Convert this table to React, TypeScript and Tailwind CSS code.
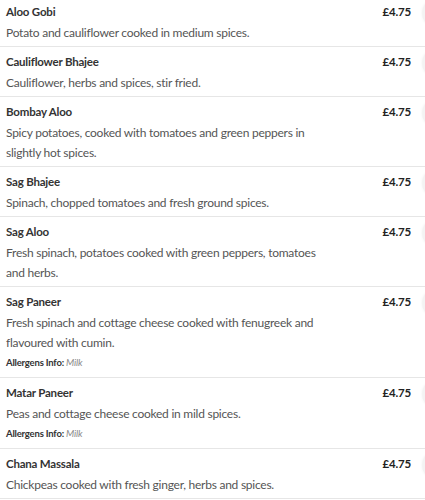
import React from "react";

type Dish = {
  name: string;
  desc: string;
  price: string;
  allergens?: string;
};

const dishes: Dish[] = [
  { name: "Aloo Gobi", desc: "Potato and cauliflower cooked in medium spices.", price: "£4.75" },
  { name: "Cauliflower Bhajee", desc: "Cauliflower, herbs and spices, stir fried.", price: "£4.75" },
  {
    name: "Bombay Aloo",
    desc: "Spicy potatoes, cooked with tomatoes and green peppers in slightly hot spices.",
    price: "£4.75",
  },
  { name: "Sag Bhajee", desc: "Spinach, chopped tomatoes and fresh ground spices.", price: "£4.75" },
  {
    name: "Sag Aloo",
    desc: "Fresh spinach, potatoes cooked with green peppers, tomatoes and herbs.",
    price: "£4.75",
  },
  {
    name: "Sag Paneer",
    desc: "Fresh spinach and cottage cheese cooked with fenugreek and flavoured with cumin.",
    price: "£4.75",
    allergens: "Milk",
  },
  {
    name: "Matar Paneer",
    desc: "Peas and cottage cheese cooked in mild spices.",
    price: "£4.75",
    allergens: "Milk",
  },
  { name: "Chana Massala", desc: "Chickpeas cooked with fresh ginger, herbs and spices.", price: "£4.75" },
];

function DishRow({ dish }: { dish: Dish }) {
  return (
    <div className={`flex border-b border-[#e6e6e6] pt-[5px] ${dish.allergens ? "pb-[6px]" : "pb-[3px]"}`}>
      <div className="w-[326px] shrink-0 pl-[6px]">
        <div className="text-[11.5px] font-bold leading-5 tracking-[-0.2px] text-[#333]">{dish.name}</div>
        <p className="mt-[1px] text-[12px] leading-5 tracking-[-0.25px] text-[#555]">{dish.desc}</p>
        {dish.allergens && (
          <div className="mt-[2px] text-[9.5px] leading-4 tracking-[-0.2px]">
            <span className="font-bold text-[#333]">Allergens Info: </span>
            <span className="italic text-[#8a8a8a]">{dish.allergens}</span>
          </div>
        )}
      </div>
      <div className="flex flex-1 items-start justify-end">
        <span className="text-[11.5px] font-bold leading-5 tracking-[-0.2px] text-[#222]">{dish.price}</span>
      </div>
      <div className="ml-[11px] mt-[-3px] h-7 w-7 shrink-0 rounded-full bg-[#f3f3f3] shadow-[0_0_3px_rgba(0,0,0,0.06)]" />
    </div>
  );
}

export default function App() {
  return (
    <div className="h-[500px] w-[425px] overflow-hidden bg-white font-['Lato',sans-serif]">
      <div className="-mt-[3px] w-[450px]">
        {dishes.map((d) => (
          <DishRow key={d.name} dish={d} />
        ))}
      </div>
    </div>
  );
}
